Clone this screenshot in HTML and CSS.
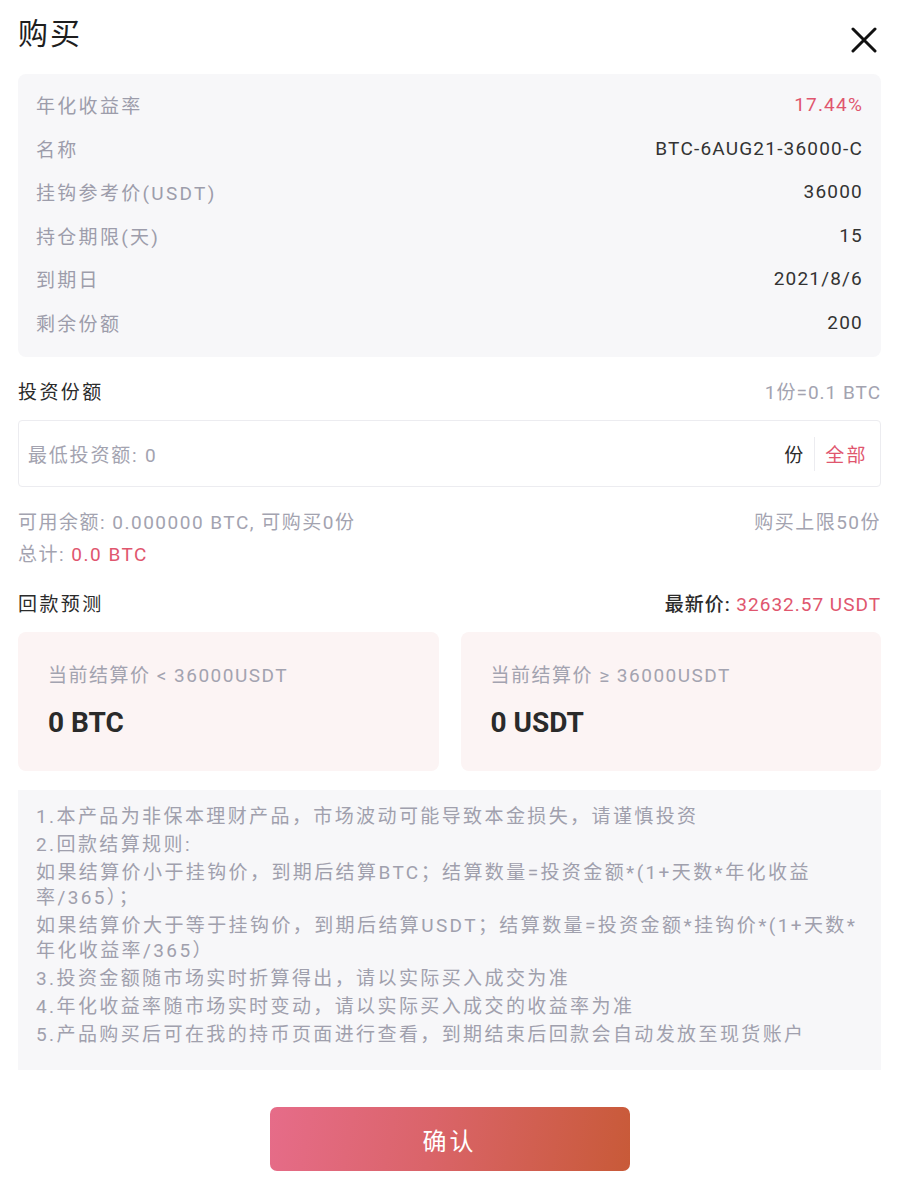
FILE: index.html
```html
<!DOCTYPE html>
<html lang="zh-CN">
<head>
<meta charset="utf-8">
<title>购买</title>
<link rel="stylesheet" href="styles.css">
</head>
<body>
<div class="page">
  <header class="header">
    <h1 class="title">购买</h1>
    <button class="close" aria-label="关闭">
      <svg width="26" height="26" viewBox="0 0 26 26"><path d="M2 2L24 24M24 2L2 24" stroke="#111" stroke-width="3" stroke-linecap="round"/></svg>
    </button>
  </header>

  <section class="info">
    <div class="row"><span class="label">年化收益率</span><span class="value red">17.44%</span></div>
    <div class="row"><span class="label">名称</span><span class="value">BTC-6AUG21-36000-C</span></div>
    <div class="row"><span class="label">挂钩参考价(USDT)</span><span class="value">36000</span></div>
    <div class="row"><span class="label">持仓期限(天)</span><span class="value">15</span></div>
    <div class="row"><span class="label">到期日</span><span class="value">2021/8/6</span></div>
    <div class="row"><span class="label">剩余份额</span><span class="value">200</span></div>
  </section>

  <div class="sec-head first">
    <span class="sec-title">投资份额</span>
    <span class="hint">1份=0.1 BTC</span>
  </div>

  <div class="input-box">
    <span class="placeholder">最低投资额: 0</span>
    <div class="input-right">
      <span class="unit">份</span>
      <span class="divider"></span>
      <span class="all">全部</span>
    </div>
  </div>

  <div class="meta-row avail">
    <span class="muted">可用余额: 0.000000 BTC, 可购买0份</span>
    <span class="muted">购买上限50份</span>
  </div>
  <div class="meta-row total">
    <span class="muted">总计: <span class="red">0.0 BTC</span></span>
  </div>

  <div class="sec-head predict">
    <span class="sec-title">回款预测</span>
    <span class="latest">最新价: <span class="red">32632.57 USDT</span></span>
  </div>

  <div class="cards">
    <div class="card">
      <div class="card-label">当前结算价 &lt; 36000USDT</div>
      <div class="card-value">0 BTC</div>
    </div>
    <div class="card">
      <div class="card-label">当前结算价 ≥ 36000USDT</div>
      <div class="card-value">0 USDT</div>
    </div>
  </div>

  <div class="notes">
    <p>1.本产品为非保本理财产品，市场波动可能导致本金损失，请谨慎投资</p>
    <p>2.回款结算规则:</p>
    <p>如果结算价小于挂钩价，到期后结算BTC；结算数量=投资金额*(1+天数*年化收益率/365）；</p>
    <p>如果结算价大于等于挂钩价，到期后结算USDT；结算数量=投资金额*挂钩价*(1+天数*年化收益率/365）</p>
    <p>3.投资金额随市场实时折算得出，请以实际买入成交为准</p>
    <p>4.年化收益率随市场实时变动，请以实际买入成交的收益率为准</p>
    <p>5.产品购买后可在我的持币页面进行查看，到期结束后回款会自动发放至现货账户</p>
  </div>

  <div class="actions">
    <button class="confirm">确认</button>
  </div>
</div>
</body>
</html>
```

FILE: styles.css
```css
* { box-sizing: border-box; }
html, body { margin: 0; padding: 0; background: #fff; }
body {
  font-family: Roboto, "Noto Sans CJK SC", sans-serif;
  color: #333;
}
.page {
  width: 900px;
  padding: 0 19px 0 18px;
}
.header {
  height: 74px;
  display: flex;
  align-items: center;
  justify-content: space-between;
}
.title {
  margin: 0;
  font-size: 30px;
  font-weight: 400;
  letter-spacing: 2px;
  color: #1e1e1e;
  line-height: 1;
  position: relative;
  top: -3px;
}
.close {
  border: 0;
  background: none;
  padding: 0;
  margin-right: 4px;
  width: 26px;
  height: 26px;
  position: relative;
  top: 3px;
}
.close svg { display: block; }

.info {
  background: #f7f7f9;
  border-radius: 8px;
  padding: 9px 18px 13px 18px;
}
.row {
  height: 43.5px;
  display: flex;
  align-items: center;
  justify-content: space-between;
}
.label {
  font-size: 19px;
  letter-spacing: 2.3px;
  color: #9d9dab;
}
.value {
  font-size: 19px;
  letter-spacing: 1.2px;
  color: #333;
}
.red { color: #e0566e; }

.sec-head {
  display: flex;
  align-items: center;
  justify-content: space-between;
  height: 42px;
}
.sec-head.first { margin-top: 12px; }
.sec-title {
  font-size: 19px;
  letter-spacing: 2.4px;
  color: #2b2b2b;
}
.hint {
  font-size: 19px;
  letter-spacing: 1px;
  color: #a3a3b0;
}

.input-box {
  margin-top: 9px;
  height: 67px;
  border: 1px solid #ececf0;
  border-radius: 4px;
  display: flex;
  align-items: center;
  justify-content: space-between;
  padding: 0 12px 0 9px;
}
.placeholder {
  font-size: 19px;
  letter-spacing: 1.8px;
  color: #a3a3b0;
}
.input-right {
  display: flex;
  align-items: center;
}
.unit {
  font-size: 19px;
  letter-spacing: 2px;
  color: #2b2b2b;
}
.divider {
  width: 1px;
  height: 34px;
  background: #ececf0;
  margin: 0 10px 0 9px;
}
.all {
  font-size: 19px;
  letter-spacing: 2.4px;
  color: #e0566e;
}

.meta-row {
  display: flex;
  align-items: center;
  justify-content: space-between;
  height: 30px;
}
.meta-row.avail { margin-top: 18px; }
.meta-row.total { margin-top: 2px; }
.muted {
  font-size: 19px;
  letter-spacing: 1.5px;
  color: #a3a3b0;
}

.sec-head.predict { margin-top: 20px; height: 30px; }
.latest {
  font-size: 19px;
  letter-spacing: 1px;
  color: #2b2b2b;
  font-weight: 500;
}
.latest .red { font-weight: 400; }

.cards {
  margin-top: 15px;
  display: grid;
  grid-template-columns: 1fr 1fr;
  gap: 22px;
}
.card {
  height: 139px;
  background: #fcf4f4;
  border-radius: 8px;
  padding: 30px 30px 0 30px;
}
.card-label {
  font-size: 19px;
  letter-spacing: 1.5px;
  line-height: 28px;
  color: #a3a3b0;
}
.card-value {
  margin-top: 15px;
  font-size: 28px;
  line-height: 36px;
  font-weight: 700;
  color: #2a2a2a;
}

.notes {
  margin-top: 19px;
  height: 280px;
  background: #f7f7f9;
  padding: 14px 18px 0 18px;
}
.notes p {
  margin: 0 0 3px 0;
  font-size: 19px;
  line-height: 25px;
  letter-spacing: 2.4px;
  color: #a0a0ad;
}

.actions {
  display: flex;
  justify-content: center;
  margin-top: 37px;
}
.confirm {
  width: 360px;
  height: 64px;
  border: 0;
  border-radius: 7px;
  background: linear-gradient(100deg, #e66c89 0%, #da6469 45%, #c85a38 100%);
  color: #fff;
  font-family: "Noto Sans CJK SC", sans-serif;
  font-size: 24px;
  letter-spacing: 3px;
}
```
